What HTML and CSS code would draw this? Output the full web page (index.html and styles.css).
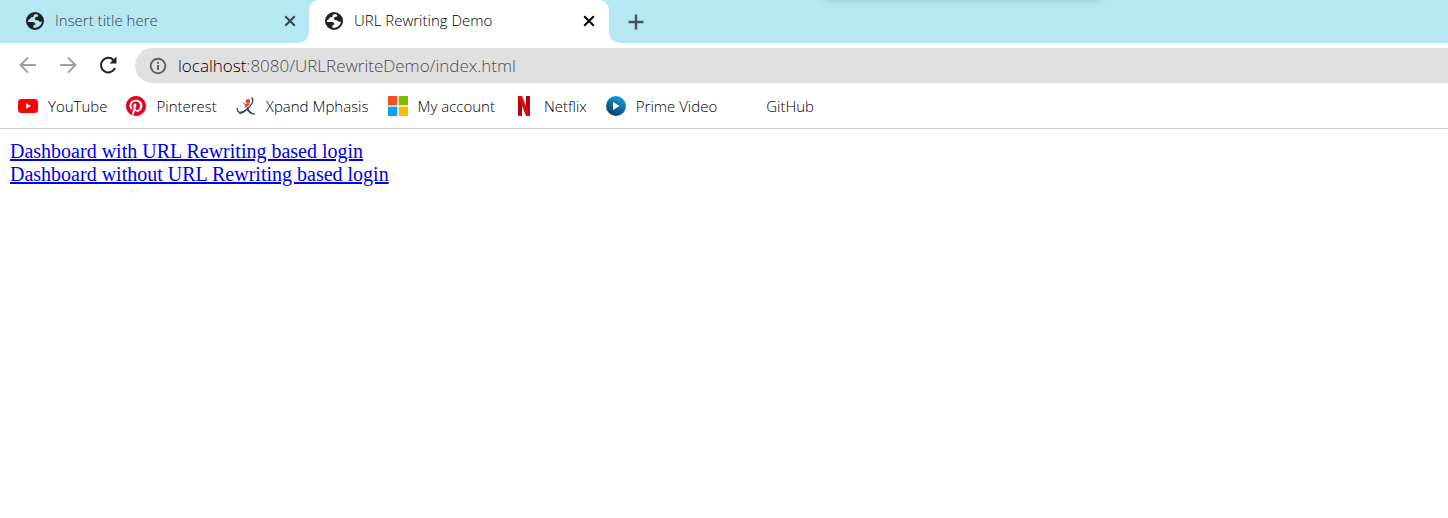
FILE: index.html
```html
<!DOCTYPE html>
<html lang="en">
<head>
<meta charset="utf-8">
<title>URL Rewriting Demo</title>
<link rel="stylesheet" href="styles.css">
</head>
<body>
<svg class="defs" aria-hidden="true">
  <symbol id="globe" viewBox="0 0 18 18">
    <path fill-rule="evenodd" d="M9 0a9 9 0 1 0 0 18A9 9 0 0 0 9 0ZM9.400 2C7.700 2.800 7.300 3.800 7.300 5L5 5.200 3.800 7.200 2.100 8.200C2 9 2 9.500 2.200 10L6.600 9.900C8.600 10 9.600 11 9.400 12.600L7.500 13.200 7.400 15.800C11.800 16.500 15.600 13.500 16 9.300L14.700 9.900 13 9.200 12 8.200 9.600 7.900 8.700 6.500 9.800 5.100 12 4.600 12.200 2.800Z"/>
  </symbol>
  <symbol id="close" viewBox="0 0 12 12"><path d="M1.200 1.200 10.800 10.800M10.800 1.200 1.200 10.800" fill="none" stroke="currentColor" stroke-width="2"/></symbol>
</svg>
<header class="browser">
  <div class="tabs">
    <div class="tab">
      <svg class="globe"><use href="#globe"/></svg>
      <span class="tab-title">Insert title here</span>
      <button class="close" aria-label="Close tab"><svg><use href="#close"/></svg></button>
    </div>
    <div class="tab active">
      <svg class="globe"><use href="#globe"/></svg>
      <span class="tab-title">URL Rewriting Demo</span>
      <button class="close" aria-label="Close tab"><svg><use href="#close"/></svg></button>
    </div>
    <button class="new-tab" aria-label="New tab"><svg viewBox="0 0 16 16"><path d="M8 .5v15M.5 8h15" fill="none" stroke="currentColor" stroke-width="2.400"/></svg></button>
  </div>
  <div class="toolbar">
    <button class="nav muted" aria-label="Back"><svg viewBox="0 0 20 20"><path d="M18 10H3M10 2.500 2.500 10l7.500 7.500"/></svg></button>
    <button class="nav muted" aria-label="Forward"><svg viewBox="0 0 20 20"><path d="M2 10h15M10 2.500l7.500 7.500-7.500 7.500"/></svg></button>
    <button class="nav" aria-label="Reload"><svg viewBox="0 0 20 20"><path d="M17 13A7.300 7.300 0 1 1 15.500 5"/><path class="solid" d="M18.500 1.500v7h-7z"/></svg></button>
    <div class="address">
      <svg viewBox="0 0 18 18" fill="none" stroke="#5f6368" stroke-width="2"><circle cx="9" cy="9" r="7.300"/><path d="M9 8v5M9 5v1.800"/></svg>
      <span class="url" role="textbox" aria-label="Address" tabindex="0"><b>localhost</b>:8080/URLRewriteDemo/index.html</span>
    </div>
  </div>
  <nav class="bookmarks" aria-label="Bookmarks">
    <a href="#"><svg viewBox="0 0 20 20"><rect y="3" width="20" height="14" rx="3.500" fill="#f00"/><path d="M8 7.200v5.600l5-2.800z" fill="#fff"/></svg>YouTube</a>
    <a href="#"><svg viewBox="0 0 24 24"><circle cx="12" cy="12" r="11.500" fill="#fff"/><path fill="#e60023" d="M12 0C5.373 0 0 5.373 0 12c0 5.084 3.163 9.426 7.627 11.174-.105-.949-.2-2.405.042-3.441.218-.937 1.407-5.965 1.407-5.965s-.359-.719-.359-1.782c0-1.668.967-2.914 2.171-2.914 1.023 0 1.518.769 1.518 1.690 0 1.029-.655 2.568-.994 3.995-.283 1.194.599 2.169 1.777 2.169 2.133 0 3.772-2.249 3.772-5.495 0-2.873-2.064-4.882-5.012-4.882-3.414 0-5.418 2.561-5.418 5.207 0 1.031.397 2.138.893 2.738a.36.36 0 0 1 .083.345l-.333 1.360c-.053.220-.174.267-.402.161-1.499-.698-2.436-2.889-2.436-4.649 0-3.785 2.750-7.262 7.929-7.262 4.163 0 7.398 2.967 7.398 6.931 0 4.136-2.607 7.464-6.227 7.464-1.216 0-2.359-.631-2.750-1.378l-.748 2.853c-.271 1.043-1.002 2.350-1.492 3.146C9.570 23.812 10.763 24 12 24c6.627 0 12-5.373 12-12S18.627 0 12 0z"/></svg>Pinterest</a>
    <a href="#"><svg viewBox="0 0 20 20" fill="none"><path d="M15.500 1.500c3.500 3-.5 8.500-5 12C6.500 16.700 1 18.500 1.200 12" stroke="#274072" stroke-width="1.300"/><path d="M3 17.500c3 .3 5.500-1.200 7.500-3.500M11.500 11.500c1.200 3.200 3.500 6 7.500 6.500-4.500.3-6.500-1.700-8-4.500Z" fill="#274072" stroke="#274072" stroke-width=".8"/><path d="M6 5.500 9.500 8 14 8 11 10.500 8.500 12.500 9 9.500Z" fill="#ee4b21"/><circle cx="12" cy="5.500" r="2.400" fill="#ee4b21"/></svg>Xpand Mphasis</a>
    <a href="#"><svg viewBox="0 0 20 20"><path fill="#f25022" d="M0 0h9.300v9.300H0z"/><path fill="#7fba00" d="M10.700 0H20v9.300h-9.300z"/><path fill="#00a4ef" d="M0 10.700h9.300V20H0z"/><path fill="#ffb900" d="M10.700 10.700H20V20h-9.300z"/></svg>My account</a>
    <a href="#"><svg viewBox="0 0 20 20"><path fill="#b1060f" d="M4 0h4v20l-4-.2zM12 0h4v19.800l-4 .2z"/><path fill="#e50914" d="M4 0h4l8 19.800-4 .2z"/></svg>Netflix</a>
    <a href="#"><svg viewBox="0 0 20 20"><defs><linearGradient id="blue" x1=".8" y1="0" x2=".3" y2="1"><stop stop-color="#16a6d3"/><stop offset="1" stop-color="#093b70"/></linearGradient></defs><circle cx="10" cy="10" r="10" fill="url(#blue)"/><path d="M7 6v8l6.500-4z" fill="#fff"/></svg>Prime Video</a>
    <a href="#"><svg viewBox="0 0 20 20"></svg>GitHub</a>
  </nav>
</header>
<main class="page">
  <a href="#">Dashboard with URL Rewriting based login</a>
  <a href="#">Dashboard without URL Rewriting based login</a>
</main>
</body>
</html>
```
FILE: styles.css
```css
* { box-sizing: border-box; }
body { margin: 0; background: #fff; }
.defs { position: absolute; width: 0; height: 0; }
button { padding: 0; border: 0; background: none; color: inherit; display: flex; align-items: center; justify-content: center; }

.browser {
  font-family: "Open Sans", "Noto Sans", sans-serif;
  font-size: 15px;
  font-weight: 300;
  line-height: 20px;
  color: #000;
  border-bottom: 1px solid #c9cccb;
}
.tabs {
  position: relative;
  display: flex;
  height: 43px;
  background: #b5e8f2;
  overflow: hidden;
}
.tabs::after {
  content: "";
  position: absolute;
  left: 57%;
  top: -10px;
  width: 19%;
  height: 10px;
  box-shadow: 0 0 6px rgba(60, 100, 110, .25);
}
.tab {
  position: relative;
  display: flex;
  align-items: center;
  width: 300px;
  padding: 0 13px 1px 16px;
  color: #35474b;
}
.tab:first-child { width: 309px; padding: 0 12px 1px 26px; }
.tab.active { background: #fff; color: #000; border-radius: 10px 10px 0 0; }
.tab.active::before, .tab.active::after {
  content: "";
  position: absolute;
  bottom: 0;
  width: 10px;
  height: 10px;
}
.tab.active::before { left: -10px; background: radial-gradient(circle at 0 0, transparent 9px, #fff 10px); }
.tab.active::after { right: -10px; background: radial-gradient(circle at 100% 0, transparent 9px, #fff 10px); }
.globe { width: 18px; height: 18px; fill: #202124; }
.tab-title { flex: 1; margin-left: 11px; padding-bottom: 2px; }
.close { width: 14px; height: 20px; }
.close svg { width: 12px; height: 12px; }
.new-tab { width: 32px; margin-left: 11px; color: #45575b; }
.new-tab svg { width: 16px; height: 16px; }

.toolbar { display: flex; align-items: center; padding: 5px 0 0 8px; }
.nav { width: 40px; height: 35px; padding-bottom: 2px; }
.nav svg { width: 20px; height: 20px; fill: none; stroke: #202124; stroke-width: 2; }
.nav.muted svg { stroke: #9c9ea0; stroke-width: 1.800; }
.nav .solid { fill: #202124; stroke: none; }
.address {
  flex: 1;
  display: flex;
  align-items: center;
  gap: 11px;
  height: 35px;
  margin-left: 7px;
  padding-left: 14px;
  border-radius: 18px 0 0 18px;
  background: #e0e0e0;
}
.address svg { width: 18px; height: 18px; }
.url { font-size: 17px; color: #4a4c50; }
.url b { font-weight: inherit; color: #000; }

.bookmarks { display: flex; gap: 19px; padding: 13px 18px 12px; }
.bookmarks a { display: flex; align-items: center; gap: 10px; height: 20px; line-height: 18px; color: inherit; text-decoration: none; white-space: nowrap; }
.bookmarks svg { width: 20px; height: 20px; }

.page {
  display: flex;
  flex-direction: column;
  align-items: flex-start;
  padding: 11px 10px;
  font-family: "Liberation Serif", "Times New Roman", serif;
  font-size: 20px;
  line-height: 23px;
}
.page a { color: #0000ee; }
```
